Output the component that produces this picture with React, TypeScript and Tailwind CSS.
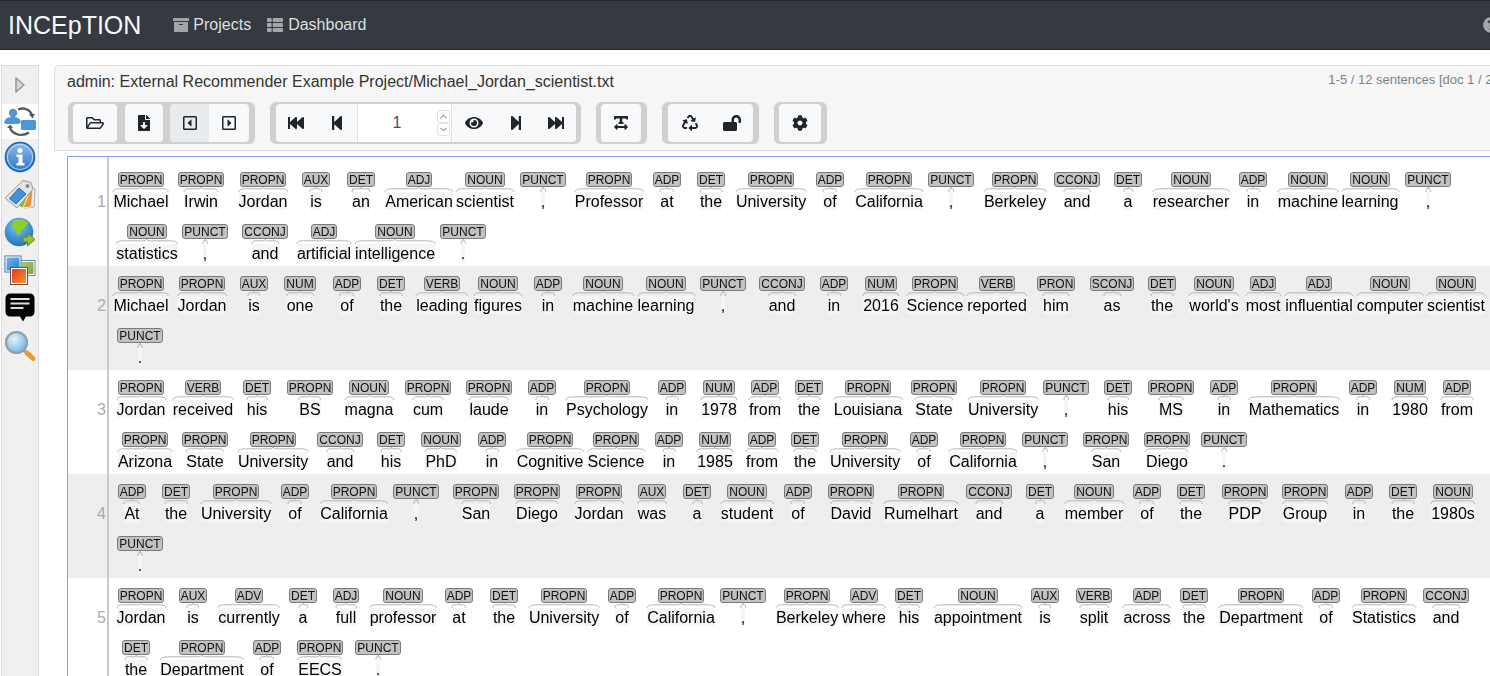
import React from "react";
import {
  FaArchive, FaThList, FaRegFolderOpen, FaFileDownload, FaRegCaretSquareLeft, FaRegCaretSquareRight,
  FaFastBackward, FaStepBackward, FaEye, FaStepForward, FaFastForward, FaTextWidth, FaRecycle, FaLockOpen, FaCog, FaQuestionCircle,
} from "react-icons/fa";
import { ChevronUp, ChevronDown } from "lucide-react";

const sentences: string[][] = [
  [
    "Michael:PROPN:141 Irwin:PROPN:201 Jordan:PROPN:263 is:AUX:316 an:DET:361 American:ADJ:419 scientist:NOUN:485 ,:PUNCT:543 Professor:PROPN:609 at:ADP:667 the:DET:711 University:PROPN:771 of:ADP:830 California:PROPN:889 ,:PUNCT:951 Berkeley:PROPN:1015 and:CCONJ:1077 a:DET:1128 researcher:NOUN:1191 in:ADP:1253 machine:NOUN:1308 learning:NOUN:1370 ,:PUNCT:1428",
    "statistics:NOUN:147 ,:PUNCT:205 and:CCONJ:265 artificial:ADJ:324 intelligence:NOUN:395 .:PUNCT:463",
  ],
  [
    "Michael:PROPN:141 Jordan:PROPN:202 is:AUX:254 one:NUM:300 of:ADP:347 the:DET:391 leading:VERB:442 figures:NOUN:498 in:ADP:548 machine:NOUN:603 learning:NOUN:666 ,:PUNCT:723 and:CCONJ:782 in:ADP:834 2016:NUM:881 Science:PROPN:935 reported:VERB:997 him:PRON:1056 as:SCONJ:1112 the:DET:1162 world's:NOUN:1214 most:ADJ:1263 influential:ADJ:1319 computer:NOUN:1390 scientist:NOUN:1456",
    ".:PUNCT:140",
  ],
  [
    "Jordan:PROPN:141 received:VERB:203 his:DET:257 BS:PROPN:310 magna:NOUN:369 cum:PROPN:428 laude:PROPN:489 in:ADP:542 Psychology:PROPN:607 in:ADP:672 1978:NUM:719 from:ADP:765 the:DET:809 Louisiana:PROPN:868 State:PROPN:934 University:PROPN:1003 ,:PUNCT:1066 his:DET:1118 MS:PROPN:1171 in:ADP:1224 Mathematics:PROPN:1294 in:ADP:1363 1980:NUM:1410 from:ADP:1457",
    "Arizona:PROPN:145 State:PROPN:205 University:PROPN:273 and:CCONJ:340 his:DET:391 PhD:NOUN:441 in:ADP:492 Cognitive:PROPN:550 Science:PROPN:616 in:ADP:669 1985:NUM:715 from:ADP:762 the:DET:805 University:PROPN:865 of:ADP:924 California:PROPN:983 ,:PUNCT:1045 San:PROPN:1106 Diego:PROPN:1167 .:PUNCT:1224",
  ],
  [
    "At:ADP:132 the:DET:176 University:PROPN:236 of:ADP:295 California:PROPN:354 ,:PUNCT:416 San:PROPN:476 Diego:PROPN:537 Jordan:PROPN:599 was:AUX:652 a:DET:697 student:NOUN:747 of:ADP:798 David:PROPN:851 Rumelhart:PROPN:921 and:CCONJ:989 a:DET:1040 member:NOUN:1094 of:ADP:1147 the:DET:1191 PDP:PROPN:1245 Group:PROPN:1305 in:ADP:1359 the:DET:1403 1980s:NOUN:1453",
    ".:PUNCT:140",
  ],
  [
    "Jordan:PROPN:141 is:AUX:193 currently:ADV:249 a:DET:303 full:ADJ:346 professor:NOUN:403 at:ADP:459 the:DET:504 University:PROPN:564 of:ADP:622 California:PROPN:681 ,:PUNCT:743 Berkeley:PROPN:807 where:ADV:864 his:DET:909 appointment:NOUN:978 is:AUX:1045 split:VERB:1094 across:ADP:1147 the:DET:1194 Department:PROPN:1261 of:ADP:1326 Statistics:PROPN:1384 and:CCONJ:1446",
    "the:DET:136 Department:PROPN:202 of:ADP:267 EECS:PROPN:320 .:PUNCT:378",
  ],
];

const CELL = 40;
const ORIGIN = 109;

function Token({ word, tag, margin }: { word: string; tag: string; margin: number }) {
  return (
    <div className="flex w-10 shrink-0 flex-col items-center" style={{ marginLeft: margin }}>
      <span className="h-[15px] whitespace-nowrap rounded-[3px] border border-[#7a7a7a] bg-[#c2c2c2] px-[1px] text-[12px] leading-[14px] text-[#111] [transform:translateZ(0)]">
        {tag}
      </span>
      <span className="relative mt-[5px] h-[18px] whitespace-nowrap rounded-[2px] bg-[#f5f5f5] text-center text-[16px] leading-[20px] text-black [transform:translateZ(0)]">
        <svg
          className="absolute left-0 top-[-5px] h-[5px] w-full overflow-visible"
          viewBox="0 0 100 5"
          preserveAspectRatio="none"
        >
          <path
            d="M0,5 C0,2.5 5,1.8 12,1.8 L42,1.8 C47,1.8 50,1.4 50,0 C50,1.4 53,1.8 58,1.8 L88,1.8 C95,1.8 100,2.5 100,5"
            fill="none"
            stroke="#b4b4b4"
            strokeWidth="1"
            vectorEffect="non-scaling-stroke"
          />
        </svg>
        {word}
      </span>
    </div>
  );
}

function Line({ data }: { data: string }) {
  let right = ORIGIN;
  return (
    <div className="flex h-[52px] pt-[10px]">
      {data.split(" ").map((t, i) => {
        const [word, tag, c] = t.split(":");
        const left = Number(c) - CELL / 2;
        const margin = left - right;
        right = left + CELL;
        return <Token key={i} word={word} tag={tag} margin={margin} />;
      })}
    </div>
  );
}

function TBtn({ children, className = "" }: { children: React.ReactNode; className?: string }) {
  return (
    <div className={"flex h-[38px] items-center justify-center text-[16px] text-[#212529] " + className}>
      {children}
    </div>
  );
}

function Group({ children, className = "pl-[5px] pr-[6px]" }: { children: React.ReactNode; className?: string }) {
  return <div className={"flex h-[42px] items-center rounded-[6px] bg-[#d0d0d0] " + className}>{children}</div>;
}

function SyncIcon() {
  return (
    <svg width="32" height="30" viewBox="0 0 32 30">
      <path d="M14 2.5 C20 0 26 2.5 28 8" fill="none" stroke="#555b60" strokeWidth="2.4" />
      <path d="M25 7 L31 7 L28.5 11.5 Z" fill="#555b60" />
      <path d="M25 25.5 C19 29.5 9 28.5 6 21" fill="none" stroke="#555b60" strokeWidth="2.4" />
      <path d="M3 21 L9 21 L6 17.5 Z" fill="#555b60" />
      <circle cx="9" cy="6" r="4.2" fill="#4a97dc" />
      <path d="M0 16 C1 10.5 4 10 9 10 C14 10 16 11.5 17 15 L15 17 L2 17 Z" fill="#4a97dc" />
      <rect x="17" y="13" width="15" height="10" rx="1.5" fill="#4a97dc" />
    </svg>
  );
}

function InfoIcon() {
  return (
    <svg width="32" height="32" viewBox="0 0 32 32">
      <defs>
        <linearGradient id="ig" x1="0" y1="0" x2="0" y2="1">
          <stop offset="0" stopColor="#8fbdea" />
          <stop offset="1" stopColor="#2a76c4" />
        </linearGradient>
      </defs>
      <circle cx="16" cy="16" r="14.5" fill="url(#ig)" stroke="#1c63b0" strokeWidth="1.6" />
      <circle cx="16" cy="16" r="12.6" fill="none" stroke="#d5e6f7" strokeWidth="0.8" />
      <circle cx="16" cy="9.5" r="2.5" fill="#fff" />
      <path d="M12.5 13.5 H18.5 V22 H20.5 V24.5 H12.5 V22 H14.5 V16 H12.5 Z" fill="#fff" />
    </svg>
  );
}

function TagsIcon() {
  return (
    <svg width="32" height="32" viewBox="0 0 32 32">
      <path d="M25 6 L31 10 L30 28 L20 29 Z" fill="#f4f4f4" stroke="#a8a8a8" />
      <path d="M24 10 L29 12 L27 28 L17 29 Z" fill="#f0923a" stroke="#e8e8e8" />
      <path d="M20 12 L25 14 L19 29 L12 26 Z" fill="#7fbd3a" stroke="#eee" />
      <path d="M19 1.5 L27 3.5 L29 10 L13 29 L1 19 Z" fill="#e4e4e4" stroke="#9a9a9a" />
      <path d="M15 9 L22 15 L12 25 L5.5 19.5 Z" fill="#3f92d4" stroke="#2a6ea8" />
      <circle cx="23.5" cy="7" r="2" fill="#8a8a8a" />
    </svg>
  );
}

function GlobeIcon() {
  return (
    <svg width="32" height="32" viewBox="0 0 32 32">
      <defs>
        <radialGradient id="gg" cx="0.45" cy="0.3" r="0.8">
          <stop offset="0" stopColor="#7cc4ee" />
          <stop offset="1" stopColor="#1566b4" />
        </radialGradient>
      </defs>
      <circle cx="15" cy="15" r="14.3" fill="url(#gg)" />
      <path d="M10 4 C14 1.5 22 2.5 24 6 C22 9 21 12 18 12 C17 16 15 17 14 19 C12 16 12 13 10 12 C8 10 7 7 10 4 Z" fill="#8fcf2c" />
      <path d="M19 20 H23.5 V16 L31 22.5 L23.5 29 V25 H19 Z" fill="#96c22e" stroke="#5e8a16" strokeWidth="1" />
    </svg>
  );
}

function ImagesIcon() {
  return (
    <svg width="32" height="32" viewBox="0 0 32 32">
      <defs>
        <linearGradient id="a1" x1="0" y1="0" x2="1" y2="1">
          <stop offset="0" stopColor="#7cc0f0" />
          <stop offset="1" stopColor="#1c74c8" />
        </linearGradient>
        <linearGradient id="a2" x1="0" y1="0" x2="1" y2="1">
          <stop offset="0" stopColor="#b4c878" />
          <stop offset="1" stopColor="#7ca030" />
        </linearGradient>
        <linearGradient id="a3" x1="0" y1="0" x2="1" y2="1">
          <stop offset="0" stopColor="#e62a1a" />
          <stop offset="1" stopColor="#f7a030" />
        </linearGradient>
      </defs>
      <rect x="16" y="5.5" width="15" height="15" fill="url(#a2)" stroke="#5b8ac0" strokeWidth="1" />
      <rect x="17" y="6.5" width="13" height="13" fill="none" stroke="#fff" strokeWidth="1" />
      <rect x="1" y="1" width="16" height="16" fill="url(#a1)" stroke="#4a6f98" strokeWidth="1" />
      <rect x="2" y="2" width="14" height="14" fill="none" stroke="#fff" strokeWidth="1" />
      <rect x="6.5" y="12.5" width="17" height="17" fill="url(#a3)" stroke="#555" strokeWidth="1" />
      <rect x="7.5" y="13.5" width="15" height="15" fill="none" stroke="#fff" strokeWidth="1" />
    </svg>
  );
}

function BubbleIcon() {
  return (
    <svg width="30" height="29" viewBox="0 0 30 29">
      <path d="M5 0.5 H25 A4.5 4.5 0 0 1 29.5 5 V19 A4.5 4.5 0 0 1 25 23.5 H21 L18 28.5 L15 23.5 H5 A4.5 4.5 0 0 1 0.5 19 V5 A4.5 4.5 0 0 1 5 0.5 Z" fill="#050505" />
      <rect x="5.5" y="5" width="19" height="2" fill="#ddd" />
      <rect x="5.5" y="9.5" width="19" height="2" fill="#ddd" />
      <rect x="5.5" y="14" width="13" height="2" fill="#ddd" />
    </svg>
  );
}

function SearchIcon() {
  return (
    <svg width="32" height="32" viewBox="0 0 32 32">
      <defs>
        <radialGradient id="sg" cx="0.4" cy="0.35" r="0.8">
          <stop offset="0" stopColor="#e4f3fc" />
          <stop offset="1" stopColor="#5aaade" />
        </radialGradient>
      </defs>
      <path d="M19 20 L22 22" stroke="#9a9a9a" strokeWidth="3" />
      <path d="M23 23 L29 28.5" stroke="#eb9c2a" strokeWidth="5" strokeLinecap="round" />
      <circle cx="12.5" cy="12.5" r="10.5" fill="url(#sg)" stroke="#949ea6" strokeWidth="2.2" />
    </svg>
  );
}

export default function App() {
  return (
    <div className="flex h-[676px] w-[1490px] flex-col overflow-hidden bg-white font-['Liberation_Sans',Arial,sans-serif] text-[16px] text-[#212529]">
      <header className="flex h-[50px] shrink-0 items-center border-b border-t border-b-[#23272b] border-t-[#23272b] bg-[#343a40] pl-[8px]">
        <span className="text-[25px] leading-none text-[#f8f9fa]">INCEpTION</span>
        <nav className="ml-[32px] flex items-center gap-[16px] text-[rgba(255,255,255,0.85)]">
          <span className="flex items-center gap-[4px]">
            <FaArchive className="text-[16px] text-[#a3a5a7]" />
            Projects
          </span>
          <span className="flex items-center gap-[5px]">
            <FaThList className="text-[16px] text-[#a3a5a7]" />
            Dashboard
          </span>
        </nav>
        <FaQuestionCircle className="ml-[1117px] shrink-0 text-[16px] text-[#a3a5a7]" />
      </header>

      <main className="flex min-h-0 flex-1 pl-[1px] pt-[15px]">
        <aside className="flex w-[38px] shrink-0 flex-col border border-b-0 border-[#dcdcdc] bg-[#f0f0f0]">
          <div className="flex h-[38px] items-center justify-center">
            <svg width="12" height="18" viewBox="0 0 12 18">
              <path d="M2 2 L10 9 L2 16 Z" fill="#d8d8d8" stroke="#9a9a9a" strokeWidth="1.6" strokeLinejoin="round" />
            </svg>
          </div>
          <div className="flex h-[35px] items-center justify-center bg-white"><SyncIcon /></div>
          <div className="mt-[1px] flex flex-col items-center gap-[6px] pt-[1px]">
            <InfoIcon />
            <TagsIcon />
            <GlobeIcon />
            <ImagesIcon />
            <BubbleIcon />
            <div className="mt-[2px]"><SearchIcon /></div>
          </div>
        </aside>

        <section className="ml-[15px] flex w-[1480px] shrink-0 flex-col">
          <div className="h-[86px] shrink-0 rounded-tl-[5px] border-b border-l border-t border-[#dedede] bg-[#f6f6f6] pl-[12px]">
            <div className="flex h-[31px] items-center justify-between pr-[38px]">
              <span className="text-[16px] leading-[30px] text-[#333]">
                admin: External Recommender Example Project/Michael_Jordan_scientist.txt
              </span>
              <span className="relative top-[-2px] text-[13px] text-[#7b838a]">1-5 / 12 sentences [doc 1 / 2]</span>
            </div>
            <div className="mt-[5px] flex gap-[15px] pl-[1px]">
              <Group>
                <div className="flex gap-[8px]">
                  <TBtn className="w-[44px] rounded-[4px] bg-[#f8f9fa]"><FaRegFolderOpen className="text-[18px]" /></TBtn>
                  <TBtn className="w-[38px] rounded-[4px] bg-[#f8f9fa]"><FaFileDownload /></TBtn>
                  <div className="ml-[-1px] flex">
                    <TBtn className="w-[39px] rounded-l-[4px] bg-[#e9ecef]"><FaRegCaretSquareLeft /></TBtn>
                    <TBtn className="w-[40px] rounded-r-[4px] bg-[#f8f9fa]"><FaRegCaretSquareRight /></TBtn>
                  </div>
                </div>
              </Group>
              <Group className="pl-[6px] pr-[5px]">
                <div className="flex overflow-hidden rounded-[4px]">
                  <TBtn className="w-[40px] bg-[#f8f9fa]"><FaFastBackward /></TBtn>
                  <TBtn className="w-[41px] bg-[#f8f9fa]"><FaStepBackward /></TBtn>
                  <div className="relative flex h-[38px] w-[95px] items-center justify-center border-x border-[#dee2e6] bg-white pr-[15px] text-[#495057]">
                    1
                    <div className="absolute right-[1px] top-[6px] flex flex-col">
                      <span className="flex h-[13px] w-[13px] items-center justify-center rounded-[3px] border border-[#e2e2e2]"><ChevronUp size={11} strokeWidth={2} /></span>
                      <span className="flex h-[13px] w-[13px] items-center justify-center rounded-[3px] border border-[#e2e2e2]"><ChevronDown size={11} strokeWidth={2} /></span>
                    </div>
                  </div>
                  <TBtn className="w-[44px] bg-[#f8f9fa]"><FaEye className="text-[18px]" /></TBtn>
                  <TBtn className="w-[40px] bg-[#f8f9fa]"><FaStepForward /></TBtn>
                  <TBtn className="w-[40px] bg-[#f8f9fa]"><FaFastForward /></TBtn>
                </div>
              </Group>
              <Group>
                <TBtn className="w-[40px] rounded-[4px] bg-[#f8f9fa]"><FaTextWidth /></TBtn>
              </Group>
              <Group className="px-[6px]">
                <div className="flex rounded-[4px] bg-[#f8f9fa]">
                  <TBtn className="w-[43px]"><FaRecycle /></TBtn>
                  <TBtn className="w-[42px]"><FaLockOpen className="text-[18px]" /></TBtn>
                </div>
              </Group>
              <Group>
                <TBtn className="w-[42px] rounded-[4px] bg-[#f8f9fa]"><FaCog /></TBtn>
              </Group>
            </div>
          </div>

          <div className="ml-[13px] mt-[5px] flex-1 border-l border-t border-[#7fa2f0]">
            {sentences.map((lines, i) => (
              <div key={i} className={"flex " + (i % 2 === 1 ? "bg-[#eeeeee]" : "bg-white") + (i === 0 ? " pt-[5px]" : "")}>
                <div className={"flex w-[41px] shrink-0 justify-end border-r-2 border-[#c8c8c8] pr-[1px] text-[16px] leading-[18px] text-[#aaaaaa] " + (i === 0 ? "mt-[-5px] pt-[36px]" : "pt-[31px]")}>
                  {i + 1}
                </div>
                <div className="flex flex-col">
                  {lines.map((l, j) => (
                    <Line key={j} data={l} />
                  ))}
                </div>
              </div>
            ))}
          </div>
        </section>
      </main>
    </div>
  );
}
